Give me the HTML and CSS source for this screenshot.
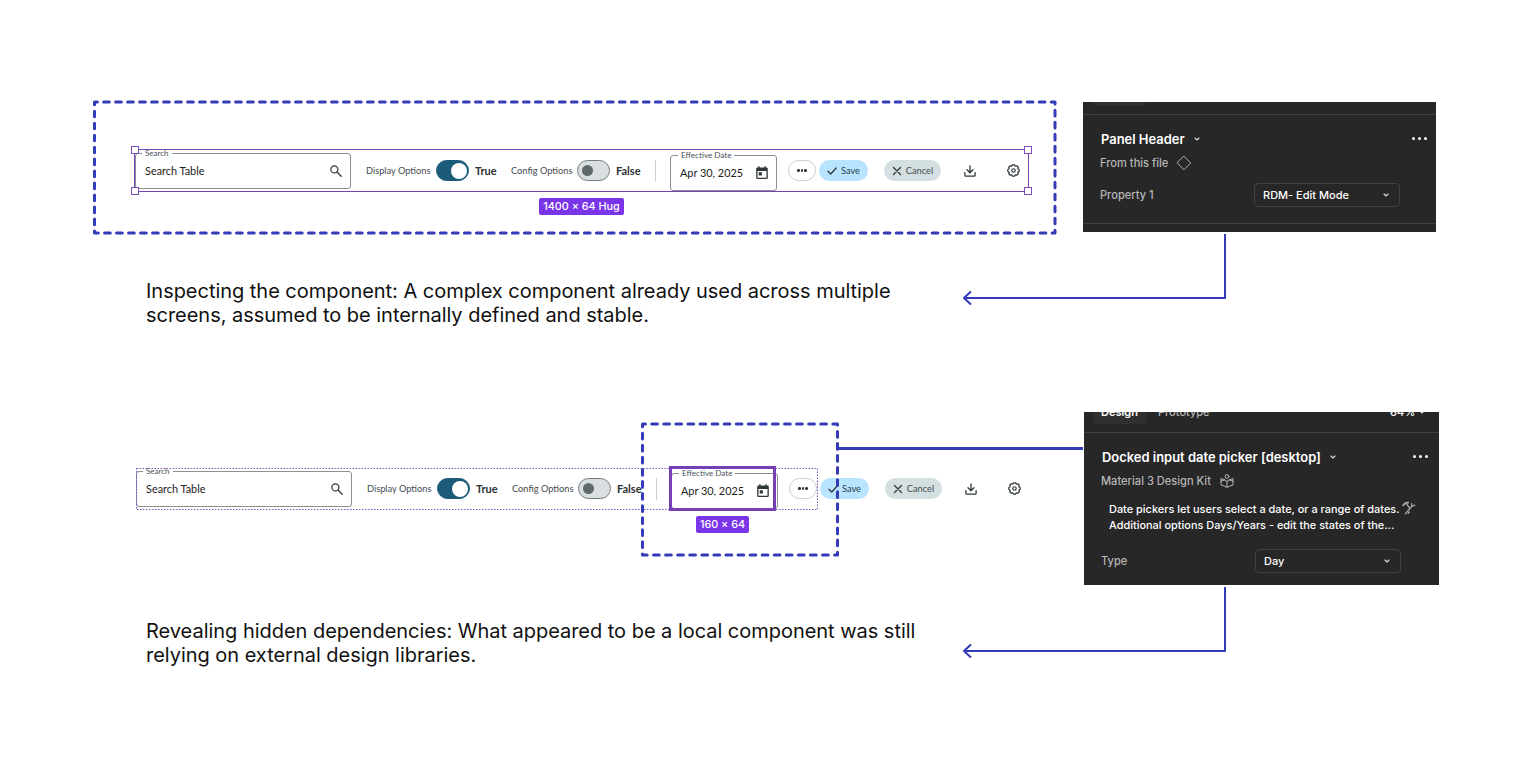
FILE: index.html
```
<!DOCTYPE html>
<html lang="en">
<head>
    <meta charset="UTF-8">
    <meta name="viewport" content="width=device-width, initial-scale=1.0">
    <title>Component inspection</title>
    <link rel="stylesheet" href="styles.css">
</head>
<body>
    <!-- shared icons -->
    <svg class="sprite" width="0" height="0">
        <symbol id="i-search" viewBox="0 0 12 12"><circle cx="4.4" cy="4.4" r="3.5"/><path d="M7 7l4.2 4.2"/></symbol>
        <symbol id="i-calendar" viewBox="0 0 12 14"><path class="solid" d="M1.4 1.6H2.2V.3H3.6V1.6H8.4V.3H9.8V1.6H10.6Q11.8 1.6 11.8 2.8V11.8Q11.8 13 10.6 13H1.4Q.2 13 .2 11.8V2.8Q.2 1.6 1.4 1.6ZM1.5 5V11.7H10.5V5ZM2.7 6.3H5.9V9.4H2.7Z"/></symbol>
        <symbol id="i-check" viewBox="0 0 10 10"><path d="M1 5.3L3.7 8 9.2 2"/></symbol>
        <symbol id="i-close" viewBox="0 0 10 10"><path d="M1.5 1.5l7 7M8.5 1.5l-7 7"/></symbol>
        <symbol id="i-download" viewBox="0 0 12 12"><path d="M6 .8V7.6M3 4.8l3 3 3-3M.9 7.6V10.2Q.9 11.1 1.8 11.1H10.2Q11.1 11.1 11.1 10.2V7.6"/></symbol>
        <symbol id="i-gear" viewBox="0 0 24 24"><circle cx="12" cy="12" r="3.2"/><path d="M10 1.5H14L15.25 4.15 18 3.17 20.83 6 19.85 8.75 22.5 10V14L19.85 15.25 20.83 18 18 20.83 15.25 19.85 14 22.5H10L8.75 19.85 6 20.83 3.17 18 4.15 15.25 1.5 14V10L4.15 8.75 3.17 6 6 3.17 8.75 4.15Z"/></symbol>
        <symbol id="i-chevron" viewBox="0 0 6 4"><path d="M1 1l2 2 2-2"/></symbol>
    </svg>

    <main class="board">
        <section class="step step-inspect">
            <div class="left">
                <div class="frame">
                    <div class="toolbar">
                        <div class="field search"><span class="legend">Search</span><span class="value">Search Table</span><svg class="icon"><use href="#i-search"/></svg></div>
                        <span class="label display">Display Options</span>
                        <span class="toggle on"></span>
                        <b class="state">True</b>
                        <span class="label config">Config Options</span>
                        <span class="toggle"></span>
                        <b class="state false">False</b>
                        <span class="divider"></span>
                        <div class="field date"><span class="legend">Effective Date</span><span class="value">Apr 30, 2025</span><svg class="icon"><use href="#i-calendar"/></svg></div>
                        <span class="pill more"><i></i><i></i><i></i></span>
                        <span class="pill save"><svg class="icon"><use href="#i-check"/></svg>Save</span>
                        <span class="pill cancel"><svg class="icon"><use href="#i-close"/></svg>Cancel</span>
                        <svg class="icon download"><use href="#i-download"/></svg>
                        <svg class="icon gear"><use href="#i-gear"/></svg>
                        <div class="selection"><i class="tl"></i><i class="tr"></i><i class="bl"></i><i class="br"></i></div>
                        <span class="size size-hug">1400 × 64 Hug</span>
                    </div>
                    <svg class="dashes"><rect x="1.5" y="2" width="960.5" height="131" pathLength="2184"/></svg>
                </div>
                <p class="caption">Inspecting the component: A complex component already used across multiple screens, assumed to be internally defined and stable.</p>
            </div>
            <aside class="panel">
                <div class="tabs"><span class="tab active"></span></div>
                <div class="props">
                    <div class="title">Panel Header <svg class="chevron"><use href="#i-chevron"/></svg><span class="dots"><i></i><i></i><i></i></span></div>
                    <div class="source">From this file <svg class="diamond" viewBox="0 0 16 16"><path d="M8 1.3L14.7 8 8 14.7 1.3 8z"/></svg></div>
                    <div class="prop"><span class="name">Property 1</span><span class="select">RDM- Edit Mode <svg class="chevron"><use href="#i-chevron"/></svg></span></div>
                </div>
            </aside>
            <svg class="arrow" viewBox="0 0 266 74"><path d="M263 0V64H2M9 57.5L2 64l7 6.5"/></svg>
        </section>

        <section class="step step-reveal">
            <div class="left">
                <div class="toolbar">
                    <div class="field search"><span class="legend">Search</span><span class="value">Search Table</span><svg class="icon"><use href="#i-search"/></svg></div>
                    <span class="label display">Display Options</span>
                    <span class="toggle on"></span>
                    <b class="state">True</b>
                    <span class="label config">Config Options</span>
                    <span class="toggle"></span>
                    <b class="state false">False</b>
                    <span class="divider"></span>
                    <div class="field date"><span class="legend">Effective Date</span><span class="value">Apr 30, 2025</span><svg class="icon"><use href="#i-calendar"/></svg></div>
                    <span class="pill more"><i></i><i></i><i></i></span>
                    <span class="pill save"><svg class="icon"><use href="#i-check"/></svg>Save</span>
                    <span class="pill cancel"><svg class="icon"><use href="#i-close"/></svg>Cancel</span>
                    <svg class="icon download"><use href="#i-download"/></svg>
                    <svg class="icon gear"><use href="#i-gear"/></svg>
                    <svg class="dotted"><rect x=".5" y=".5" width="681" height="41"/></svg>
                    <div class="picked"></div>
                    <span class="size size-date">160 × 64</span>
                    <svg class="dashes focus"><rect x="1.5" y="2" width="195" height="131" pathLength="648"/></svg>
                </div>
                <p class="caption">Revealing hidden dependencies: What appeared to be a local component was still relying on external design libraries.</p>
            </div>
            <aside class="panel panel-docked">
                <div class="tabs"><span class="tab active">Design</span><span class="tab">Prototype</span><span class="zoom">64% <svg class="chevron"><use href="#i-chevron"/></svg></span></div>
                <div class="props">
                    <div class="title">Docked input date picker [desktop] <svg class="chevron"><use href="#i-chevron"/></svg><span class="dots"><i></i><i></i><i></i></span></div>
                    <div class="source">Material 3 Design Kit <svg class="library" viewBox="0 0 14 14"><circle cx="7" cy="2.5" r="1.9"/><path d="M5 6L1 4.5V10.8L7 13.3 13 10.8V4.5L9 6M7 7.3V13M1 7.2L4.5 6 7 7.5 9.5 6 13 7.2"/></svg></div>
                    <div class="about">Date pickers let users select a date, or a range of dates. <svg class="tools" viewBox="0 0 14 14"><path class="heavy" d="M1.2 4.2Q2.8 1.8 6 1.6"/><path d="M4.6 2.8L7.6 7M3.4 12.8L9.8 5.4M6.2 12.4L7.2 11M9.8 5.4L9.6 2.6M9.8 5.4L12.8 4.2"/></svg><br>Additional options Days/Years - edit the states of the...</div>
                    <div class="prop"><span class="name">Type</span><span class="select">Day <svg class="chevron"><use href="#i-chevron"/></svg></span></div>
                </div>
            </aside>
            <span class="link"></span>
            <svg class="arrow" viewBox="0 0 266 74"><path d="M263 0V64H2M9 57.5L2 64l7 6.5"/></svg>
        </section>
    </main>
</body>
</html>
```
FILE: styles.css
```
* {
    box-sizing: border-box;
}
body {
    margin: 0;
    background: #fff;
    font-family: Inter, sans-serif;
    overflow: hidden;
}
svg {
    fill: none;
    stroke-linecap: round;
    stroke-linejoin: round;
    flex: none;
}
.sprite {
    position: absolute;
}
.board {
    width: 1537px;
    height: 766px;
}
.step {
    position: relative;
    display: flex;
    height: 383px;
}
.left {
    width: 1083px;
}
.step-inspect .left {
    padding: 100px 0 0 93px;
}
.step-reveal .left {
    width: 1084px;
    padding: 85px 0 0 136px;
}
.frame {
    position: relative;
    width: 964px;
    height: 135px;
    padding: 50px 0 0 42px;
}
.dashes {
    position: absolute;
    left: 0;
    top: 0;
    width: 964px;
    height: 135px;
    stroke: #343ab8;
    stroke-width: 3;
    stroke-dasharray: 5.7 6.3;
    stroke-dashoffset: 2.85;
}
.dashes.focus {
    left: 504.5px;
    top: -46px;
    width: 198px;
    height: 135px;
}
.caption {
    width: 790px;
    margin: 44px 0 0 53px;
    font-size: 20px;
    line-height: 24px;
    letter-spacing: -0.03px;
    color: #111;
}
.step-reveal .caption {
    margin: 110px 0 0 10px;
}

/* toolbar component */
.toolbar {
    position: relative;
    display: flex;
    align-items: center;
    width: 893px;
    height: 41px;
    font-family: Lato, sans-serif;
    font-size: 9.25px;
    color: #434b4f;
    white-space: nowrap;
}
.icon {
    stroke: #30373a;
    stroke-width: 1.3;
}
.solid {
    fill: #30373a;
    fill-rule: evenodd;
    stroke: none;
}
.field {
    position: relative;
    display: flex;
    flex: none;
    align-items: center;
    justify-content: space-between;
    height: 36px;
    padding: 0 9px 0 9px;
    border: 1px solid #8a8f92;
    border-radius: 3px;
    color: #222;
    font-size: 10.9px;
}
.search {
    width: 216px;
}
.search .icon {
    width: 12px;
    height: 12px;
    margin-right: -1px;
}
.legend {
    position: absolute;
    left: 6px;
    top: -6px;
    padding: 0 3px;
    background: #fff;
    font-size: 8px;
    line-height: 10px;
    color: #4b5357;
}
.label {
    margin-left: 15px;
    width: 70px;
}
.config {
    width: 66px;
}
.toggle {
    width: 33px;
    height: 21px;
    flex: none;
    display: flex;
    align-items: center;
    padding-left: 4px;
    border: 1.5px solid #747c80;
    border-radius: 11px;
    background: #d9dfe1;
}
.toggle::after {
    content: "";
    width: 11px;
    height: 11px;
    border-radius: 50%;
    background: #60696c;
}
.toggle.on {
    padding-left: 14px;
    border-color: #1c5a7a;
    background: #1c5a7a;
}
.toggle.on::after {
    width: 16px;
    height: 16px;
    background: #fff;
}
.state {
    margin-left: 6px;
    width: 21px;
    font-size: 11px;
    color: #2b3235;
}
.state.false {
    width: 39px;
}
.divider {
    width: 1px;
    height: 22px;
    background: #ccd0d2;
}
.date {
    width: 107px;
    margin: 4px 0 0 14px;
}
.date .legend {
    left: 7px;
    font-size: 8.1px;
}
.date .icon {
    width: 12px;
    height: 14px;
    margin-right: -1px;
}
.pill {
    flex: none;
    display: flex;
    align-items: center;
    justify-content: center;
    height: 21px;
    border-radius: 11px;
}
.pill .icon {
    width: 10px;
    height: 10px;
    margin-right: 4px;
}
.more {
    width: 28px;
    margin-left: 11px;
    gap: 1px;
    border: 1px solid #c9cdcf;
}
.more i {
    width: 2.4px;
    height: 2.4px;
    border-radius: 50%;
    background: #30373a;
}
.save {
    width: 49px;
    margin-left: 3px;
    background: #b9e4ff;
    color: #26404e;
}
.cancel {
    width: 57px;
    margin-left: 16px;
    background: #d3dfe0;
}
.download {
    width: 12px;
    height: 12px;
    margin-left: 23px;
}
.gear {
    width: 13px;
    height: 13px;
    margin-left: 31px;
    stroke-width: 2.2;
}

/* editor annotations over the toolbar */
.selection {
    position: absolute;
    inset: -1px -1px -1px -1px;
    border: 1.5px solid #7545b4;
}
.selection i {
    position: absolute;
    width: 8px;
    height: 8px;
    border: 1.4px solid #7d4fbd;
    background: #fff;
}
.tl, .bl {
    left: -4px;
}
.tr, .br {
    right: -4px;
}
.tl, .tr {
    top: -4px;
}
.bl, .br {
    bottom: -4px;
}
.size {
    position: absolute;
    display: flex;
    align-items: center;
    justify-content: center;
    height: 17px;
    border-radius: 2px;
    background: #7b35e8;
    color: #fff;
    font: 500 10.8px Inter, sans-serif;
}
.size-hug {
    left: 404px;
    top: 48px;
    width: 85px;
}
.size-date {
    left: 560px;
    top: 48px;
    width: 53px;
}
.dotted {
    position: absolute;
    left: 0;
    top: 0;
    width: 682px;
    height: 42px;
    stroke: #8259c4;
    stroke-width: 1.2;
    stroke-dasharray: 1.5 1.5;
    stroke-linecap: butt;
}
.picked {
    position: absolute;
    left: 533px;
    top: -2px;
    width: 107px;
    height: 45px;
    border: 3px solid #7440b4;
}

/* properties panel */
.panel {
    width: 353px;
    height: 130px;
    margin-top: 102px;
    background: #272727;
    color: #fff;
    overflow: hidden;
    font-size: 11px;
    font-weight: 500;
    white-space: nowrap;
}
.panel-docked {
    width: 355px;
    height: 173px;
    margin-top: 29px;
}
.tabs {
    display: flex;
    height: 13px;
    padding: 0 14px 0 10px;
    border-bottom: 1px solid #414141;
}
.panel-docked .tabs {
    height: 21px;
}
.tab {
    height: 24px;
    margin-top: -12px;
    padding: 0 6px;
    line-height: 24px;
    color: #b5b5b5;
}
.tab.active {
    width: 52px;
    margin-right: 6px;
    padding: 0 7px;
    border-radius: 4px;
    background: #303030;
    color: #fff;
    font-weight: 600;
}
.panel:not(.panel-docked) .tab {
    margin-top: -20px;
}
.zoom {
    margin: -12px 0 0 auto;
    line-height: 24px;
}
.chevron {
    width: 6px;
    height: 4px;
    stroke: #ddd;
    stroke-width: 1.1;
}
.zoom .chevron {
    margin: 0 0 2px 1px;
}
.props {
    height: 109px;
    padding: 12px 9px 0 17px;
    border-bottom: 1px solid #414141;
}
.panel-docked .props {
    padding-right: 11px;
    border: 0;
}
.title, .source, .prop {
    display: flex;
    align-items: center;
    height: 24px;
}
.title {
    padding-left: 1px;
    font-size: 12.95px;
    font-weight: 600;
}
.title .chevron {
    margin-left: 9px;
}
.dots {
    display: flex;
    gap: 3px;
    margin: -2px 0 0 auto;
}
.dots i {
    width: 3px;
    height: 3px;
    border-radius: 50%;
    background: #fff;
}
.source, .name {
    color: #b6b6b6;
    font-size: 11.1px;
    font-weight: 500;
}
.diamond {
    width: 16px;
    height: 16px;
    margin-left: 8px;
    stroke: #b6b6b6;
}
.library {
    width: 14px;
    height: 14px;
    margin-left: 9px;
    stroke: #b6b6b6;
}
.about {
    margin: 8px 0 0 8px;
    height: 32px;
    line-height: 16px;
    font-size: 10.95px;
}
.tools {
    width: 14px;
    height: 14px;
    margin: -2px 0 -2px 0;
    stroke: #a8a8a8;
    stroke-width: 1.3;
}
.heavy {
    stroke-width: 2;
}
.prop {
    margin-top: 8px;
}
.panel-docked .prop {
    margin-top: 16px;
}
.name {
    width: 154px;
}
.select {
    display: flex;
    align-items: center;
    justify-content: space-between;
    width: 146px;
    height: 24px;
    padding: 0 10px 0 8px;
    border: 1px solid #414141;
    border-radius: 4px;
    font-size: 11px;
}

/* connectors between panels and captions */
.arrow {
    position: absolute;
    left: 962px;
    top: 234px;
    width: 266px;
    height: 74px;
    stroke: #343ab8;
    stroke-width: 2;
    stroke-linecap: butt;
}
.step-reveal .arrow {
    top: 204px;
}
.link {
    position: absolute;
    left: 838px;
    top: 64px;
    width: 245px;
    height: 3px;
    background: #343ab8;
}
```
